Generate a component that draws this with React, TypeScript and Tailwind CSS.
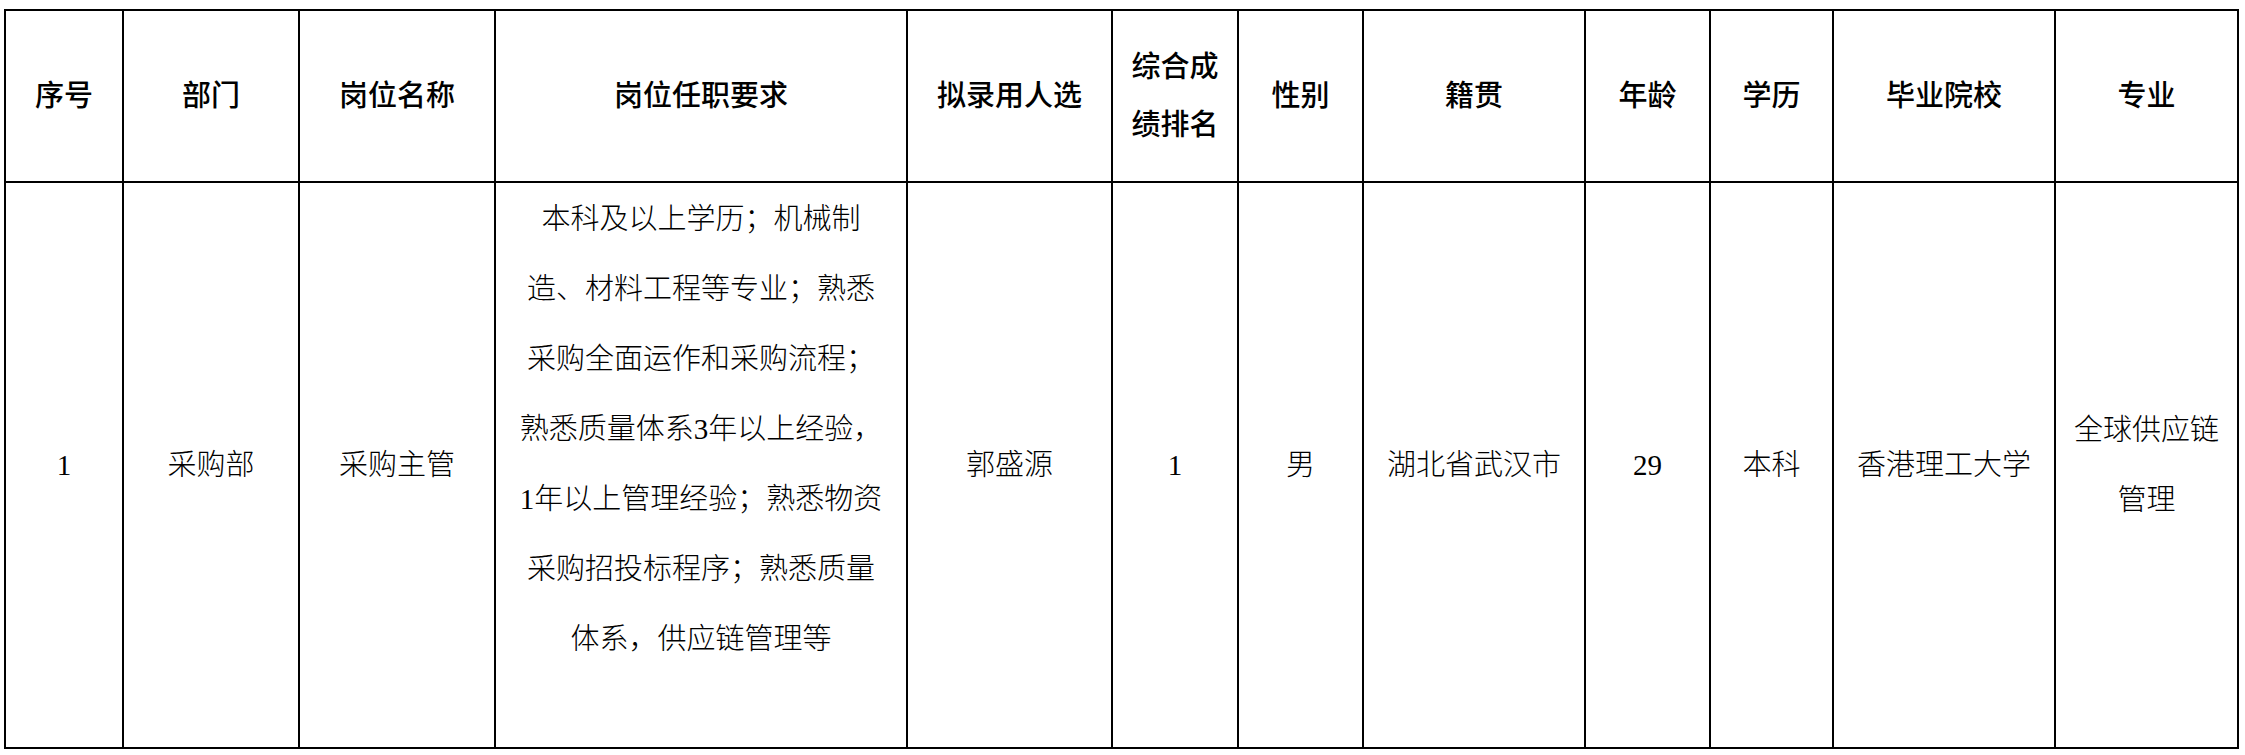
// 拟录用人员公示表 — single-row recruitment table

const headers: { key: string; lines: string[] }[] = [
  { key: "no", lines: ["序号"] },
  { key: "dept", lines: ["部门"] },
  { key: "post", lines: ["岗位名称"] },
  { key: "req", lines: ["岗位任职要求"] },
  { key: "name", lines: ["拟录用人选"] },
  { key: "rank", lines: ["综合成", "绩排名"] },
  { key: "sex", lines: ["性别"] },
  { key: "origin", lines: ["籍贯"] },
  { key: "age", lines: ["年龄"] },
  { key: "edu", lines: ["学历"] },
  { key: "school", lines: ["毕业院校"] },
  { key: "major", lines: ["专业"] },
];

const requirement = [
  "本科及以上学历；机械制",
  "造、材料工程等专业；熟悉",
  "采购全面运作和采购流程；",
  "熟悉质量体系3年以上经验，",
  "1年以上管理经验；熟悉物资",
  "采购招投标程序；熟悉质量",
  "体系，供应链管理等",
];

const row: { key: string; lines: string[] }[] = [
  { key: "no", lines: ["1"] },
  { key: "dept", lines: ["采购部"] },
  { key: "post", lines: ["采购主管"] },
  { key: "req", lines: requirement },
  { key: "name", lines: ["郭盛源"] },
  { key: "rank", lines: ["1"] },
  { key: "sex", lines: ["男"] },
  { key: "origin", lines: ["湖北省武汉市"] },
  { key: "age", lines: ["29"] },
  { key: "edu", lines: ["本科"] },
  { key: "school", lines: ["香港理工大学"] },
  { key: "major", lines: ["全球供应链", "管理"] },
];

function HeaderCell({ lines }: { lines: string[] }) {
  return (
    <div className="flex items-center justify-center border-r-2 border-b-2 border-black text-center font-medium leading-[58px]">
      <div>
        {lines.map((l) => (
          <div key={l} className="whitespace-nowrap">
            {l}
          </div>
        ))}
      </div>
    </div>
  );
}

function BodyCell({ id, lines }: { id: string; lines: string[] }) {
  // the requirement column sits at the top of its cell, the rest are centred
  const isReq = id === "req";
  return (
    <div
      className={
        isReq
          ? "flex items-start justify-center border-r-2 border-b-2 border-black pt-[1px] text-center font-light leading-[70px]"
          : "flex items-center justify-center border-r-2 border-b-2 border-black text-center font-light leading-[70px]"
      }
    >
      <div>
        {lines.map((l) => (
          <div key={l} className="whitespace-nowrap">
            {l}
          </div>
        ))}
      </div>
    </div>
  );
}

export default function App() {
  return (
    <div className="min-h-screen bg-white pt-[9px] pl-[4px] font-[family-name:'Liberation_Serif','Noto_Sans_CJK_SC',serif] text-[29px] text-black">
      <div className="grid w-fit grid-cols-[118px_176px_196px_412px_205px_126px_125px_222px_125px_123px_222px_183px] grid-rows-[172px_566px] border-t-2 border-l-2 border-black">
        {headers.map((h) => (
          <HeaderCell key={h.key} lines={h.lines} />
        ))}
        {row.map((c) => (
          <BodyCell key={c.key} id={c.key} lines={c.lines} />
        ))}
      </div>
    </div>
  );
}
